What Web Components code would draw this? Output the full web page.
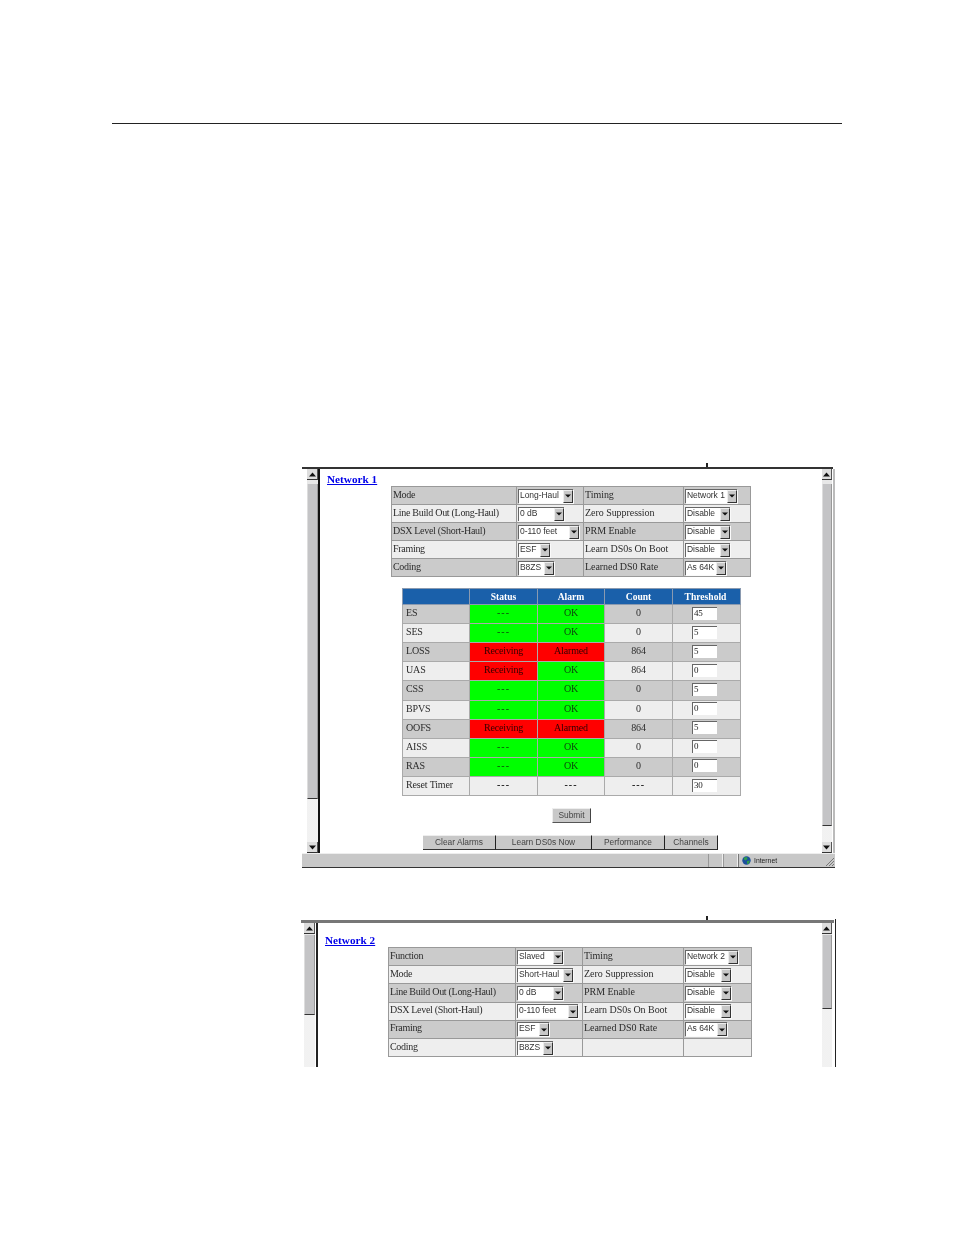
<!DOCTYPE html>
<html>
<head>
<meta charset="utf-8">
<title>Network settings</title>
<style>
  html, body { margin: 0; background: #fff; }
  body { font-family: "Liberation Serif", serif; }
</style>
</head>
<body>
<manual-page>
  <browser-frame tick="404" style="--top:339px;--lead:5px;--line:2px;--gap:0px;--main:502px;--line-color:#111;--top-h:2px;--top-c:#333;--right-edge:#bbb;--pad-top:4px;--w:533px;--h:405px">
    <scroll-rail slot="left" thumb="315" gap="4"></scroll-rail>
    <network-view title-text="Network 1" left="7" table-left="71" link-top="3" table-top="0">
      <config-table row="18" widths="125,67,100,67" rows='[
        ["Mode",["Long-Haul",55],"Timing",["Network 1",52]],
        ["Line Build Out (Long-Haul)",["0 dB",46],"Zero Suppression",["Disable",45]],
        ["DSX Level (Short-Haul)",["0-110 feet",61],"PRM Enable",["Disable",45]],
        ["Framing",["ESF",32],"Learn DS0s On Boot",["Disable",45]],
        ["Coding",["B8ZS",36],"Learned DS0 Rate",["As 64K",41]]]'></config-table>
      <alarm-table></alarm-table>
      <action-bar></action-bar>
    </network-view>
    <scroll-rail slot="right" thumb="342" gap="4"></scroll-rail>
    <status-strip slot="status"></status-strip>
  </browser-frame>
  <browser-frame tick="405" style="--top:48px;--shift:-1px;--lead:3px;--line:2px;--gap:1px;--main:504px;--line-color:#222;--top-h:3px;--top-c:#777;--right-edge:#fff;--pad-top:4px;--w:535px;--h:151px;--right-line:#222">
    <scroll-rail slot="left" thumb="80" gap="1" open></scroll-rail>
    <network-view title-text="Network 2" left="7" table-left="70" link-top="10" table-top="0">
      <config-table row="18.2" widths="127,67,101,68" rows='[
        ["Function",["Slaved",46],"Timing",["Network 2",53]],
        ["Mode",["Short-Haul",56],"Zero Suppression",["Disable",46]],
        ["Line Build Out (Long-Haul)",["0 dB",46],"PRM Enable",["Disable",46]],
        ["DSX Level (Short-Haul)",["0-110 feet",61],"Learn DS0s On Boot",["Disable",46]],
        ["Framing",["ESF",32],"Learned DS0 Rate",["As 64K",42]],
        ["Coding",["B8ZS",36],"",""]]'></config-table>
    </network-view>
    <scroll-rail slot="right" thumb="74" gap="1" open></scroll-rail>
  </browser-frame>
</manual-page>

<script>
class ManualPage extends HTMLElement {
  constructor() {
    super();
    this.attachShadow({ mode: 'open' });
    this.shadowRoot.innerHTML = `
      <style>
        :host { display: block; padding: 123px 0 0 112px; height: 1112px; }
        .rule { width: 730px; height: 1px; background: #222; }
        .figures { margin-left: 190px; }
      </style>
      <div class="rule"></div>
      <div class="figures"><slot></slot></div>
    `;
  }
}

class BrowserFrame extends HTMLElement {
  constructor() {
    super();
    this.attachShadow({ mode: 'open' });
  }

  connectedCallback() {
    const tick = this.getAttribute('tick');
    this.shadowRoot.innerHTML = `
      <style>
        :host {
          display: block; position: relative; overflow: hidden;
          width: var(--w); height: var(--h); margin-top: var(--top); margin-left: var(--shift, 0);
          box-sizing: border-box; padding-top: var(--pad-top);
          filter: blur(.3px);
        }
        .tick { position: absolute; left: ${tick}px; top: 0; width: 1.5px; height: var(--pad-top); background: #222; }
        .outer { display: flex; flex-direction: column; height: 100%; }
        .topline { height: var(--top-h); background: var(--top-c); flex: none; width: calc(100% - 2px); }
        .body {
          flex: 1; min-height: 0; display: grid;
          grid-template-columns: var(--lead) 11px var(--gap) var(--line) var(--main) 10px auto;
        }
        .dark { background: var(--line-color); }
        .main { overflow: hidden; }
        .edge { border-right: 2px solid var(--right-edge); position: relative; }
        .edge::after { content: ""; position: absolute; right: -2px; top: -4px; bottom: 0; width: 1px; background: var(--right-line, transparent); }
        ::slotted(status-strip) { flex: none; }
      </style>
      <div class="tick"></div>
      <div class="outer">
        <div class="topline"></div>
        <div class="body">
          <div></div>
          <slot name="left"></slot>
          <div></div>
          <div class="dark"></div>
          <div class="main"><slot></slot></div>
          <slot name="right"></slot>
          <div class="edge"></div>
        </div>
        <slot name="status"></slot>
      </div>
    `;
  }
}

class ScrollRail extends HTMLElement {
  constructor() {
    super();
    this.attachShadow({ mode: 'open' });
  }

  connectedCallback() {
    const arrow = (d) => `<svg width="7" height="5" viewBox="0 0 7 5"><path d="${d}" fill="#111"/></svg>`;
    this.shadowRoot.innerHTML = `
      <style>
        :host { display: flex; flex-direction: column; height: 100%; min-height: 0; overflow: hidden; }
        .btn {
          flex: none; height: 11px; background: #ddd; box-sizing: border-box;
          border-bottom: 1px solid #333; border-right: 1px solid #555;
          display: flex; align-items: center; justify-content: center;
        }
        .spacer { flex: none; height: ${this.getAttribute('gap')}px; background: #e8e8e8; }
        .thumb { flex: none; height: ${this.getAttribute('thumb')}px; background: #c4c4c6; border-bottom: 1px solid #333; box-sizing: border-box; border-right: 1px solid #999; border-left: 1px solid #ddd; }
        .track {
          flex: 1; min-height: 0;
          background-color: #d2d2d2;
          background-image: radial-gradient(#f4f4f4 .7px, transparent .8px);
          background-size: 2px 2px;
        }
      </style>
      <div class="btn">${arrow('M3.5 .5 L7 4.5 H0 Z')}</div>
      <div class="spacer"></div>
      <div class="thumb"></div>
      <div class="track"></div>
      ${this.hasAttribute('open') ? '' : `<div class="btn">${arrow('M0 .5 H7 L3.5 4.5 Z')}</div>`}
    `;
  }
}

class StatusStrip extends HTMLElement {
  constructor() {
    super();
    this.attachShadow({ mode: 'open' });
    this.shadowRoot.innerHTML = `
      <style>
        :host {
          display: flex; height: 15px; box-sizing: border-box; background: #c8c8c8;
          border-top: 1px solid #eee; border-bottom: 1px solid #333;
          font: 6.8px "Liberation Sans", sans-serif; color: #222;
        }
        .fill { width: 406px; flex: none; }
        .slot { width: 15px; flex: none; border-left: 1px solid #999; border-right: 1px solid #eee; box-sizing: border-box; }
        .zone { flex: 1; display: flex; align-items: center; gap: 3px; padding-left: 3px; border-left: 1px solid #777; }
        .grip { flex: none; width: 10px; height: 13px; }
      </style>
      <div class="fill"></div>
      <div class="slot"></div>
      <div class="slot"></div>
      <div class="zone">
        <svg width="9" height="9" viewBox="0 0 9 9">
          <circle cx="4.5" cy="4.5" r="4.2" fill="#1b4f9c"/>
          <path d="M2 1.5 L5 1 L5.5 3 L3.5 4.5 L2 3.5 Z M5 5 L7.8 4.5 L7 7.5 L5 8 Z" fill="#2f9d4a"/>
        </svg>
        <span>Internet</span>
      </div>
      <svg class="grip" viewBox="0 0 10 13">
        <path d="M9 4 L1 12 M9 7 L4 12 M9 10 L7 12" stroke="#777" stroke-width="1" fill="none"/>
      </svg>
    `;
  }
}

class NetworkView extends HTMLElement {
  constructor() {
    super();
    this.attachShadow({ mode: 'open' });
  }

  connectedCallback() {
    const left = this.getAttribute('left');
    this.shadowRoot.innerHTML = `
      <style>
        :host { display: block; height: 100%; }
        a {
          display: block; width: max-content; margin: ${this.getAttribute('link-top')}px 0 0 ${left}px;
          font: bold 11.2px/14px "Liberation Serif", serif; color: #0000e8; letter-spacing: .02px;
        }
        .stack { margin: ${this.getAttribute('table-top')}px 0 0 ${this.getAttribute('table-left')}px; }
      </style>
      <a href="#">${this.getAttribute('title-text')}</a>
      <div class="stack"><slot></slot></div>
    `;
  }
}

class PickBox extends HTMLElement {
  constructor() {
    super();
    this.attachShadow({ mode: 'open' });
  }

  connectedCallback() {
    this.shadowRoot.innerHTML = `
      <style>
        :host {
          display: flex; box-sizing: border-box; height: 14px; width: ${this.getAttribute('w')}px;
          background: #fff; border-left: 1.5px solid #666; border-top: 1.5px solid #666;
          box-shadow: 1px 1px 0 #fafafa;
          font: 8.5px/11px "Liberation Sans", sans-serif; color: #333;
        }
        span { flex: 1; padding-left: 1.5px; white-space: nowrap; overflow: hidden; }
        b {
          flex: none; width: 10px; background: #c8c8c8; box-sizing: border-box;
          border-right: 1px solid #333; border-bottom: 1px solid #333; border-top: 1px solid #eee; border-left: 1px solid #eee;
          display: flex; align-items: center; justify-content: center;
        }
      </style>
      <span>${this.getAttribute('label')}</span>
      <b><svg width="6" height="4" viewBox="0 0 6 4"><path d="M0 .5 H6 L3 3.5 Z" fill="#111"/></svg></b>
    `;
  }
}

class ConfigTable extends HTMLElement {
  constructor() {
    super();
    this.attachShadow({ mode: 'open' });
  }

  connectedCallback() {
    const widths = this.getAttribute('widths').split(',');
    const rows = JSON.parse(this.getAttribute('rows'));
    const cell = (value) => Array.isArray(value)
      ? `<td class="pick"><pick-box label="${value[0]}" w="${value[1]}"></pick-box></td>`
      : `<td>${value}</td>`;
    this.shadowRoot.innerHTML = `
      <style>
        :host { display: block; width: max-content; }
        table { border-collapse: collapse; table-layout: fixed; border: 1px solid #999; }
        td {
          height: ${this.getAttribute('row')}px; padding: 0 0 2px 1px; border: 1px solid #999; box-sizing: border-box;
          font: 10px/12px "Liberation Serif", serif; color: #2c2c2c; letter-spacing: -.05px; white-space: nowrap;
        }
        td:first-child { letter-spacing: -.3px; }
        td.pick { padding: 0 0 0 .5px; }
        tr:nth-child(odd) td { background: #cbcbcb; }
        tr:nth-child(even) td { background: #eee; }
      </style>
      <table>
        <colgroup>${widths.map((w) => `<col style="width:${w}px">`).join('')}</colgroup>
        ${rows.map((row) => `<tr>${row.map(cell).join('')}</tr>`).join('')}
      </table>
    `;
  }
}

const ALARMS = [
  ['ES', 'idle', 'OK', '0', '45'],
  ['SES', 'idle', 'OK', '0', '5'],
  ['LOSS', 'Receiving', 'Alarmed', '864', '5'],
  ['UAS', 'Receiving', 'OK', '864', '0'],
  ['CSS', 'idle', 'OK', '0', '5'],
  ['BPVS', 'idle', 'OK', '0', '0'],
  ['OOFS', 'Receiving', 'Alarmed', '864', '5'],
  ['AISS', 'idle', 'OK', '0', '0'],
  ['RAS', 'idle', 'OK', '0', '0'],
];

class AlarmTable extends HTMLElement {
  constructor() {
    super();
    this.attachShadow({ mode: 'open' });
  }

  connectedCallback() {
    const box = (v) => `<td><div class="thr">${v}</div></td>`;
    const body = ALARMS.map((a) => `
      <tr>
        <td class="name">${a[0]}</td>
        <td class="${a[1] === 'idle' ? 'ok dots' : 'bad'}">${a[1] === 'idle' ? '---' : a[1]}</td>
        <td class="${a[2] === 'OK' ? 'ok' : 'bad'}">${a[2]}</td>
        <td>${a[3]}</td>
        ${box(a[4])}
      </tr>`).join('');
    this.shadowRoot.innerHTML = `
      <style>
        :host { display: block; margin: 11px 0 0 11px; width: max-content; }
        table { border-collapse: collapse; table-layout: fixed; border: 1px solid #999; }
        th {
          height: 16px; padding: 0 0 1px; box-sizing: border-box; background: #1a60aa; color: #fff; border: 1px solid #8a9ab0;
          font: bold 9.6px/11px "Liberation Serif", serif;
        }
        th:last-child { padding-right: 2px; }
        td {
          height: 19.12px; padding: 0 0 2px; box-sizing: border-box; text-align: center; border: 1px solid #aaa;
          font: 10px/12px "Liberation Serif", serif; color: #2c2c2c; letter-spacing: -.15px;
        }
        td.name { text-align: left; padding-left: 3px; }
        tbody tr:nth-child(odd) td { background: #cbcbcb; }
        tbody tr:nth-child(even) td { background: #eee; }
        tbody tr td.ok { background: #00ff00; color: #0c4a0c; }
        tbody tr td.bad { background: #ff0000; color: #300; }
        td.dots, td.dash { letter-spacing: 1px; }
        .thr {
          box-sizing: border-box; width: 25px; height: 13px; margin-left: 19px; background: #fff; text-align: left;
          border-left: 1.5px solid #666; border-top: 1.5px solid #666; padding-left: 1px;
          font: 9px/11px "Liberation Serif", serif; color: #222;
        }
        td.dash { color: #111; font-weight: bold; }
      </style>
      <table>
        <colgroup>
          <col style="width:67px"><col style="width:68px"><col style="width:67px"><col style="width:68px"><col style="width:68px">
        </colgroup>
        <thead><tr><th></th><th>Status</th><th>Alarm</th><th>Count</th><th>Threshold</th></tr></thead>
        <tbody>
          ${body}
          <tr><td class="name">Reset Timer</td><td class="dash">---</td><td class="dash">---</td><td class="dash">---</td>${box('30')}</tr>
        </tbody>
      </table>
    `;
  }
}

class ActionBar extends HTMLElement {
  constructor() {
    super();
    this.attachShadow({ mode: 'open' });
    this.shadowRoot.innerHTML = `
      <style>
        :host { display: block; font: 8.4px "Liberation Sans", sans-serif; color: #444; }
        .submit {
          width: 39px; height: 15px; box-sizing: border-box; margin: 12px 0 0 161px; padding-bottom: 2px;
          background: #c8c8c8; border-right: 1.5px solid #444; border-bottom: 1px solid #555; border-top: 1px solid #eee; border-left: 1px solid #eee;
          display: flex; align-items: center; justify-content: center;
        }
        .tabs { display: flex; margin: 12px 0 0 32px; }
        .tabs div {
          flex: none; height: 15px; box-sizing: border-box; background: #c8c8c8; padding-bottom: 2px;
          border-right: 1px solid #222; border-bottom: 1px solid #333; border-top: 1px solid #eee;
          display: flex; align-items: center; justify-content: center;
        }
      </style>
      <div class="submit">Submit</div>
      <div class="tabs">
        <div style="width:73px">Clear Alarms</div>
        <div style="width:96px">Learn DS0s Now</div>
        <div style="width:73px">Performance</div>
        <div style="width:53px">Channels</div>
      </div>
    `;
  }
}

customElements.define('manual-page', ManualPage);
customElements.define('browser-frame', BrowserFrame);
customElements.define('scroll-rail', ScrollRail);
customElements.define('status-strip', StatusStrip);
customElements.define('network-view', NetworkView);
customElements.define('pick-box', PickBox);
customElements.define('config-table', ConfigTable);
customElements.define('alarm-table', AlarmTable);
customElements.define('action-bar', ActionBar);
</script>
</body>
</html>
